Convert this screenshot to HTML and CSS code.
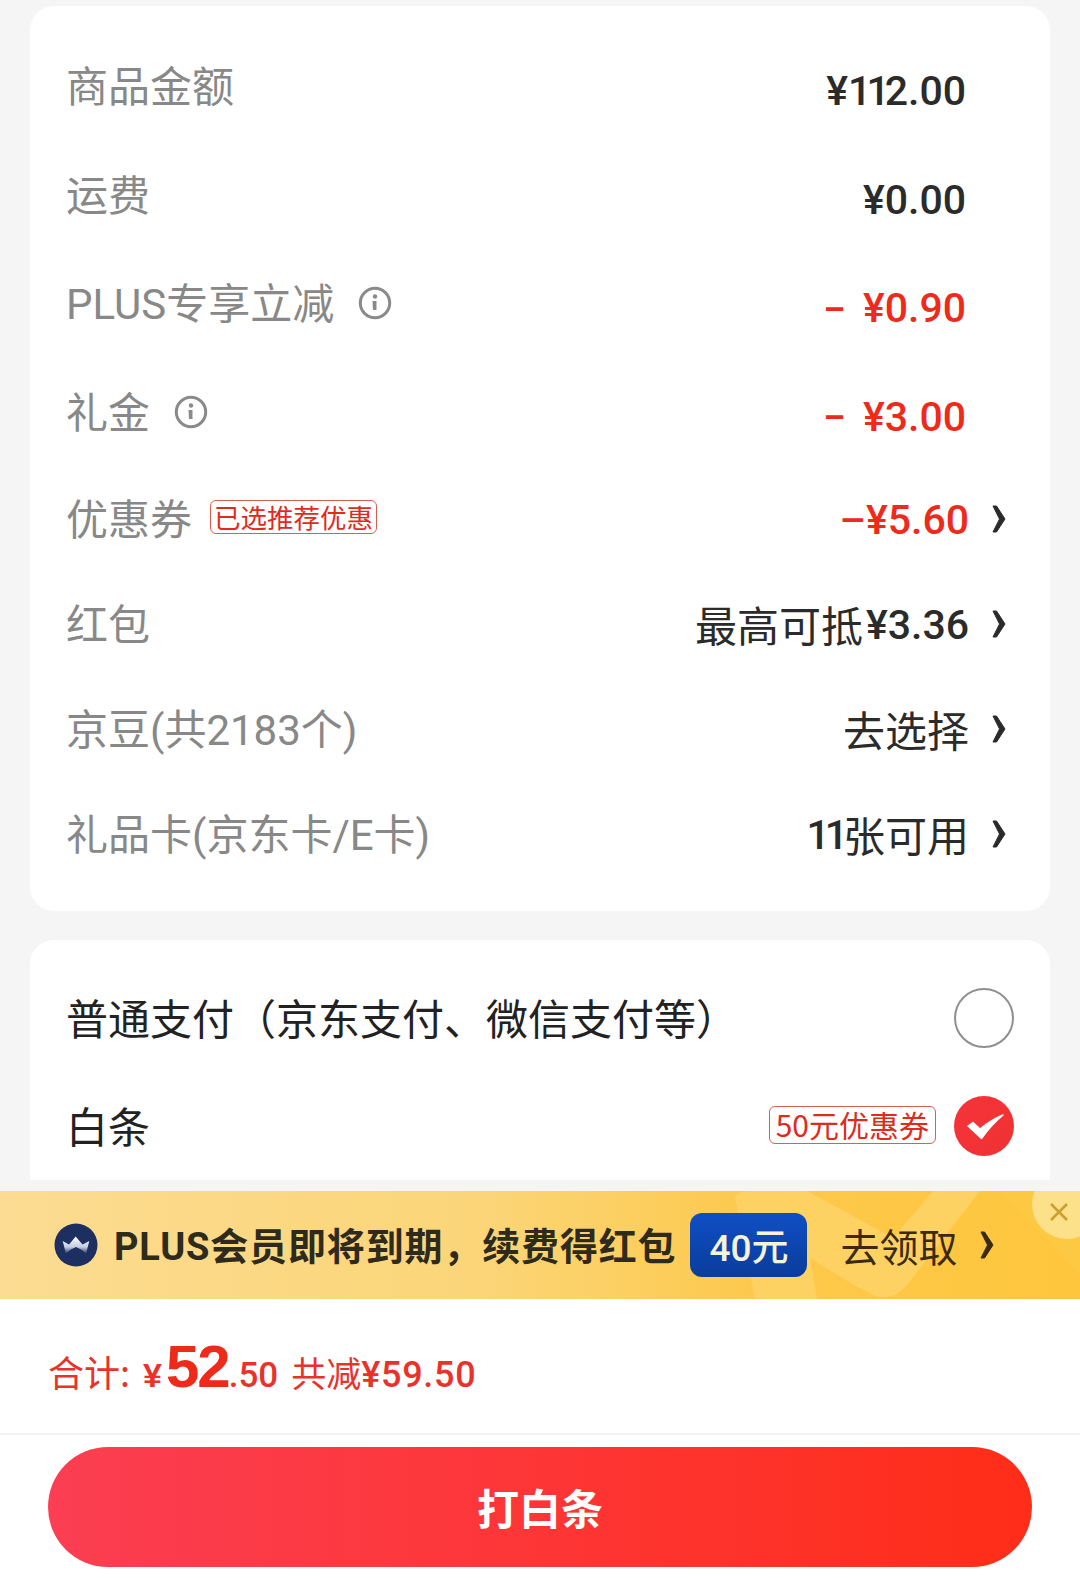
FILE: index.html
```html
<!DOCTYPE html>
<html lang="zh">
<head>
<meta charset="utf-8">
<title>结算</title>
<link rel="stylesheet" href="styles.css">
</head>
<body>
<div class="page">
  <section class="card summary">
    <div class="row row-a"><span class="label">商品金额</span><span class="value num nochev">¥<span class="ones">11</span>2.00</span></div>
    <div class="row row-a"><span class="label">运费</span><span class="value num nochev">¥0.00</span></div>
    <div class="row row-a"><span class="label">PLUS专享立减<svg class="info" viewBox="0 0 34 34"><circle cx="17" cy="17" r="14.7" fill="none" stroke="#8a8a8a" stroke-width="3"/><circle cx="17" cy="10.500" r="2.200" fill="#8a8a8a"/><path d="M14.500 15h4v9h-3.500z" fill="#8a8a8a"/></svg></span><span class="value num red nochev"><span class="minus">–</span>¥0.90</span></div>
    <div class="row row-a"><span class="label">礼金<svg class="info" viewBox="0 0 34 34"><circle cx="17" cy="17" r="14.7" fill="none" stroke="#8a8a8a" stroke-width="3"/><circle cx="17" cy="10.500" r="2.200" fill="#8a8a8a"/><path d="M14.500 15h4v9h-3.500z" fill="#8a8a8a"/></svg></span><span class="value num red nochev"><span class="minus">–</span>¥3.00</span></div>
    <div class="row row-b"><span class="label">优惠券<span class="tag tag-rec">已选推荐优惠</span></span><span class="value num red">–¥5.60<svg class="chev" viewBox="0 0 14 30"><path d="M1 2H4.500L13 15 4.500 28H1L7.500 15Z" fill="#2a2a2a" stroke="#2a2a2a" stroke-linejoin="round"/></svg></span></div>
    <div class="row row-b"><span class="label">红包</span><span class="value num"><span class="cjk prefix">最高可抵</span>¥3.36<svg class="chev" viewBox="0 0 14 30"><path d="M1 2H4.500L13 15 4.500 28H1L7.500 15Z" fill="#2a2a2a" stroke="#2a2a2a" stroke-linejoin="round"/></svg></span></div>
    <div class="row row-b"><span class="label">京豆(共2183个)</span><span class="value"><span class="cjk">去选择</span><svg class="chev" viewBox="0 0 14 30"><path d="M1 2H4.500L13 15 4.500 28H1L7.500 15Z" fill="#2a2a2a" stroke="#2a2a2a" stroke-linejoin="round"/></svg></span></div>
    <div class="row row-b"><span class="label">礼品卡(京东卡/E卡)</span><span class="value num"><span class="ones">11</span><span class="cjk">张可用</span><svg class="chev" viewBox="0 0 14 30"><path d="M1 2H4.500L13 15 4.500 28H1L7.500 15Z" fill="#2a2a2a" stroke="#2a2a2a" stroke-linejoin="round"/></svg></span></div>
  </section>

  <section class="card pay">
    <div class="pay-row"><span class="pay-name">普通支付（京东支付、微信支付等）</span><span class="radio"></span></div>
    <div class="pay-row"><span class="pay-name">白条</span><span class="pay-side"><span class="tag tag-coupon">50元优惠券</span><span class="radio checked"><svg viewBox="0 0 60 60"><path d="M14 30 19 26.500 26 33Q37 24 49 19 37 29 27.500 42.500Z" fill="#fff" stroke="#fff" stroke-width="1.500" stroke-linejoin="round"/></svg></span></span></div>
  </section>

  <aside class="banner">
    <svg class="banner-art" viewBox="0 0 380 108" preserveAspectRatio="none"><path d="M300 0H380V84Z" fill="#fec942"/><path d="M35 6Q38 0 50 0H107L193 47 233 0H280L207 94Q195 108 180 106 170 105 110 67L117 108H55Z" fill="#fdd263"/></svg>
    <span class="close"><svg viewBox="0 0 20 20"><path d="M2 2 18 18M18 2 2 18" stroke="#c9a032" stroke-width="2.600" fill="none"/></svg></span>
    <svg class="plus-logo" viewBox="0 0 44 44"><defs><linearGradient id="crown" x1="0" y1="0" x2="0" y2="1"><stop offset="0" stop-color="#fff"/><stop offset=".6" stop-color="#c3cede"/><stop offset="1" stop-color="#1c2f60"/></linearGradient></defs><circle cx="22" cy="22" r="21.500" fill="#1c2f60"/><path d="M8.700 18 15 21.500 21.700 13.500 28.500 21.500 35.300 18 32 31 28 27 22 24 16 27 12 31Z" fill="url(#crown)"/></svg>
    <span class="banner-text">PLUS会员即将到期，续费得红包</span>
    <span class="banner-badge">40元</span>
    <span class="banner-link">去领取</span>
    <svg class="banner-chev" viewBox="0 0 14 30"><path d="M1 2H4.500L13 15 4.500 28H1L7.500 15Z" fill="#3a2a10" stroke="#3a2a10" stroke-linejoin="round"/></svg>
  </aside>

  <footer class="footer">
    <div class="total"><span class="total-label">合计:</span><span class="yen">¥</span><span class="big">52</span><span class="cents">.50</span><span class="saved">共减</span><span class="saved-num">¥59.50</span></div>
    <div class="action"><button class="cta" type="button">打白条</button></div>
  </footer>
</div>
</body>
</html>
```
FILE: styles.css
```css
* { box-sizing: border-box; }
html, body { margin: 0; padding: 0; }
body {
  width: 1080px;
  height: 1578px;
  background: #f5f5f5;
  font-family: "Noto Sans CJK SC", "Noto Sans", sans-serif;
  overflow: hidden;
}
.page { display: flex; flex-direction: column; height: 1578px; padding-top: 6px; }
.card { background: #fff; margin: 0 30px; }
.summary { height: 905px; border-radius: 24px; padding: 28px 37px 0 36px; }
.row { display: flex; align-items: center; justify-content: space-between; }
.row-a { height: 108.500px; }
.row-b { height: 105px; }
.label { display: flex; align-items: center; font-size: 42px; color: #888; line-height: 1; font-family: Roboto, "Noto Sans CJK SC", sans-serif; }
.info { width: 34px; height: 34px; margin: 0 0 4px 24px; }
.value { display: flex; align-items: center; font-size: 41px; color: #2b2b2b; line-height: 1; }
.num { font-family: Roboto, "Noto Sans CJK SC", sans-serif; font-weight: 500; }
.cjk { font-family: "Noto Sans CJK SC", sans-serif; font-weight: 400; font-size: 42px; margin-bottom: 4px; }
.prefix { margin-right: 3px; }
.ones { letter-spacing: -5px; }
.red { color: #ee2a1a; }
.nochev { padding: 7px 47px 0 0; }
.minus { font-size: 34px; font-weight: 700; margin-right: 18px; }
.chev { width: 14px; height: 30px; margin: 0 7px 4px 23px; }
.tag { font-family: "Noto Sans CJK SC", sans-serif; color: #de2b1e; background: #fff; border: 1px solid #d9604f; border-radius: 6px; white-space: nowrap; line-height: 1; }
.tag-rec { font-size: 26.500px; margin: 0 0 7px 18px; padding: 3px; }
.tag-coupon { font-size: 30px; padding: 2px 6px 4px; margin-bottom: 2px; }

.pay { height: 240px; border-radius: 24px 24px 0 0; margin-top: 29px; padding: 24px 36px 0 36px; }
.pay-row { display: flex; align-items: center; justify-content: space-between; height: 108px; }
.pay-name { font-size: 42px; color: #222; line-height: 1; padding-bottom: 3px; }
.pay-side { display: flex; align-items: center; gap: 18px; }
.radio { display: block; width: 60px; height: 60px; border-radius: 50%; border: 2px solid #8f8f8f; }
.radio.checked { border: 0; background: linear-gradient(135deg, #f5333a, #f03232); }
.radio svg { display: block; width: 60px; height: 60px; }

.banner {
  position: relative;
  display: flex;
  align-items: center;
  height: 108px;
  margin-top: 11px;
  padding-left: 54px;
  background: linear-gradient(90deg, #fbdc92 0%, #fbd577 45%, #fdc94c 70%, #fec63c 100%);
  overflow: hidden;
}
.banner-art { position: absolute; right: 0; top: 0; width: 380px; height: 108px; }
.close { position: absolute; right: -22px; top: -22px; width: 70px; height: 70px; border-radius: 50%; background: #fde08a; }
.close svg { position: absolute; left: 17px; top: 33px; width: 20px; height: 20px; }
.plus-logo { position: relative; width: 44px; height: 44px; flex: none; }
.banner-text { position: relative; margin-left: 16px; padding-top: 3px; font-size: 38px; font-weight: 700; letter-spacing: .85px; color: #2e2a1c; line-height: 1; white-space: nowrap; font-family: Roboto, "Noto Sans CJK SC", sans-serif; }
.banner-badge { position: relative; display: flex; align-items: center; justify-content: center; width: 117px; height: 64px; margin-left: 14px; border-radius: 12px; background: linear-gradient(180deg, #0f4fc4, #0a3c9c); color: #f7f3d8; font-size: 37px; font-family: Roboto, "Noto Sans CJK SC", sans-serif; font-weight: 500; }
.banner-link { position: relative; margin-left: 33px; font-size: 39px; color: #3b2a10; line-height: 1; }
.banner-chev { position: relative; width: 14px; height: 30px; margin-left: 22px; }

.footer { flex: 1; background: #fff; display: flex; flex-direction: column; }
.total { display: flex; align-items: baseline; height: 136px; padding: 38px 0 0 48px; border-bottom: 2px solid #f3f3f3; color: #e8322a; line-height: 1; white-space: nowrap; }
.total-label { font-size: 36px; margin-right: 13px; }
.yen { font-family: "Liberation Sans", sans-serif; font-weight: 700; font-size: 34px; margin-right: 4px; }
.big { font-family: "Liberation Sans", sans-serif; font-weight: 700; font-size: 60px; letter-spacing: -2px; color: #ee2a1a; }
.cents { font-family: Roboto, sans-serif; font-weight: 500; font-size: 35px; margin-right: 13px; }
.saved { font-size: 35px; }
.saved-num { font-family: Roboto, sans-serif; font-weight: 500; font-size: 36px; letter-spacing: .7px; }
.action { padding: 12px 48px 0; }
.cta { display: block; width: 984px; height: 120px; border: 0; border-radius: 60px; background: linear-gradient(90deg, #fb3e53, #ff2d18); color: #fff; font-family: "Noto Sans CJK SC", sans-serif; font-weight: 700; font-size: 42px; padding: 0 0 2px; }
```
